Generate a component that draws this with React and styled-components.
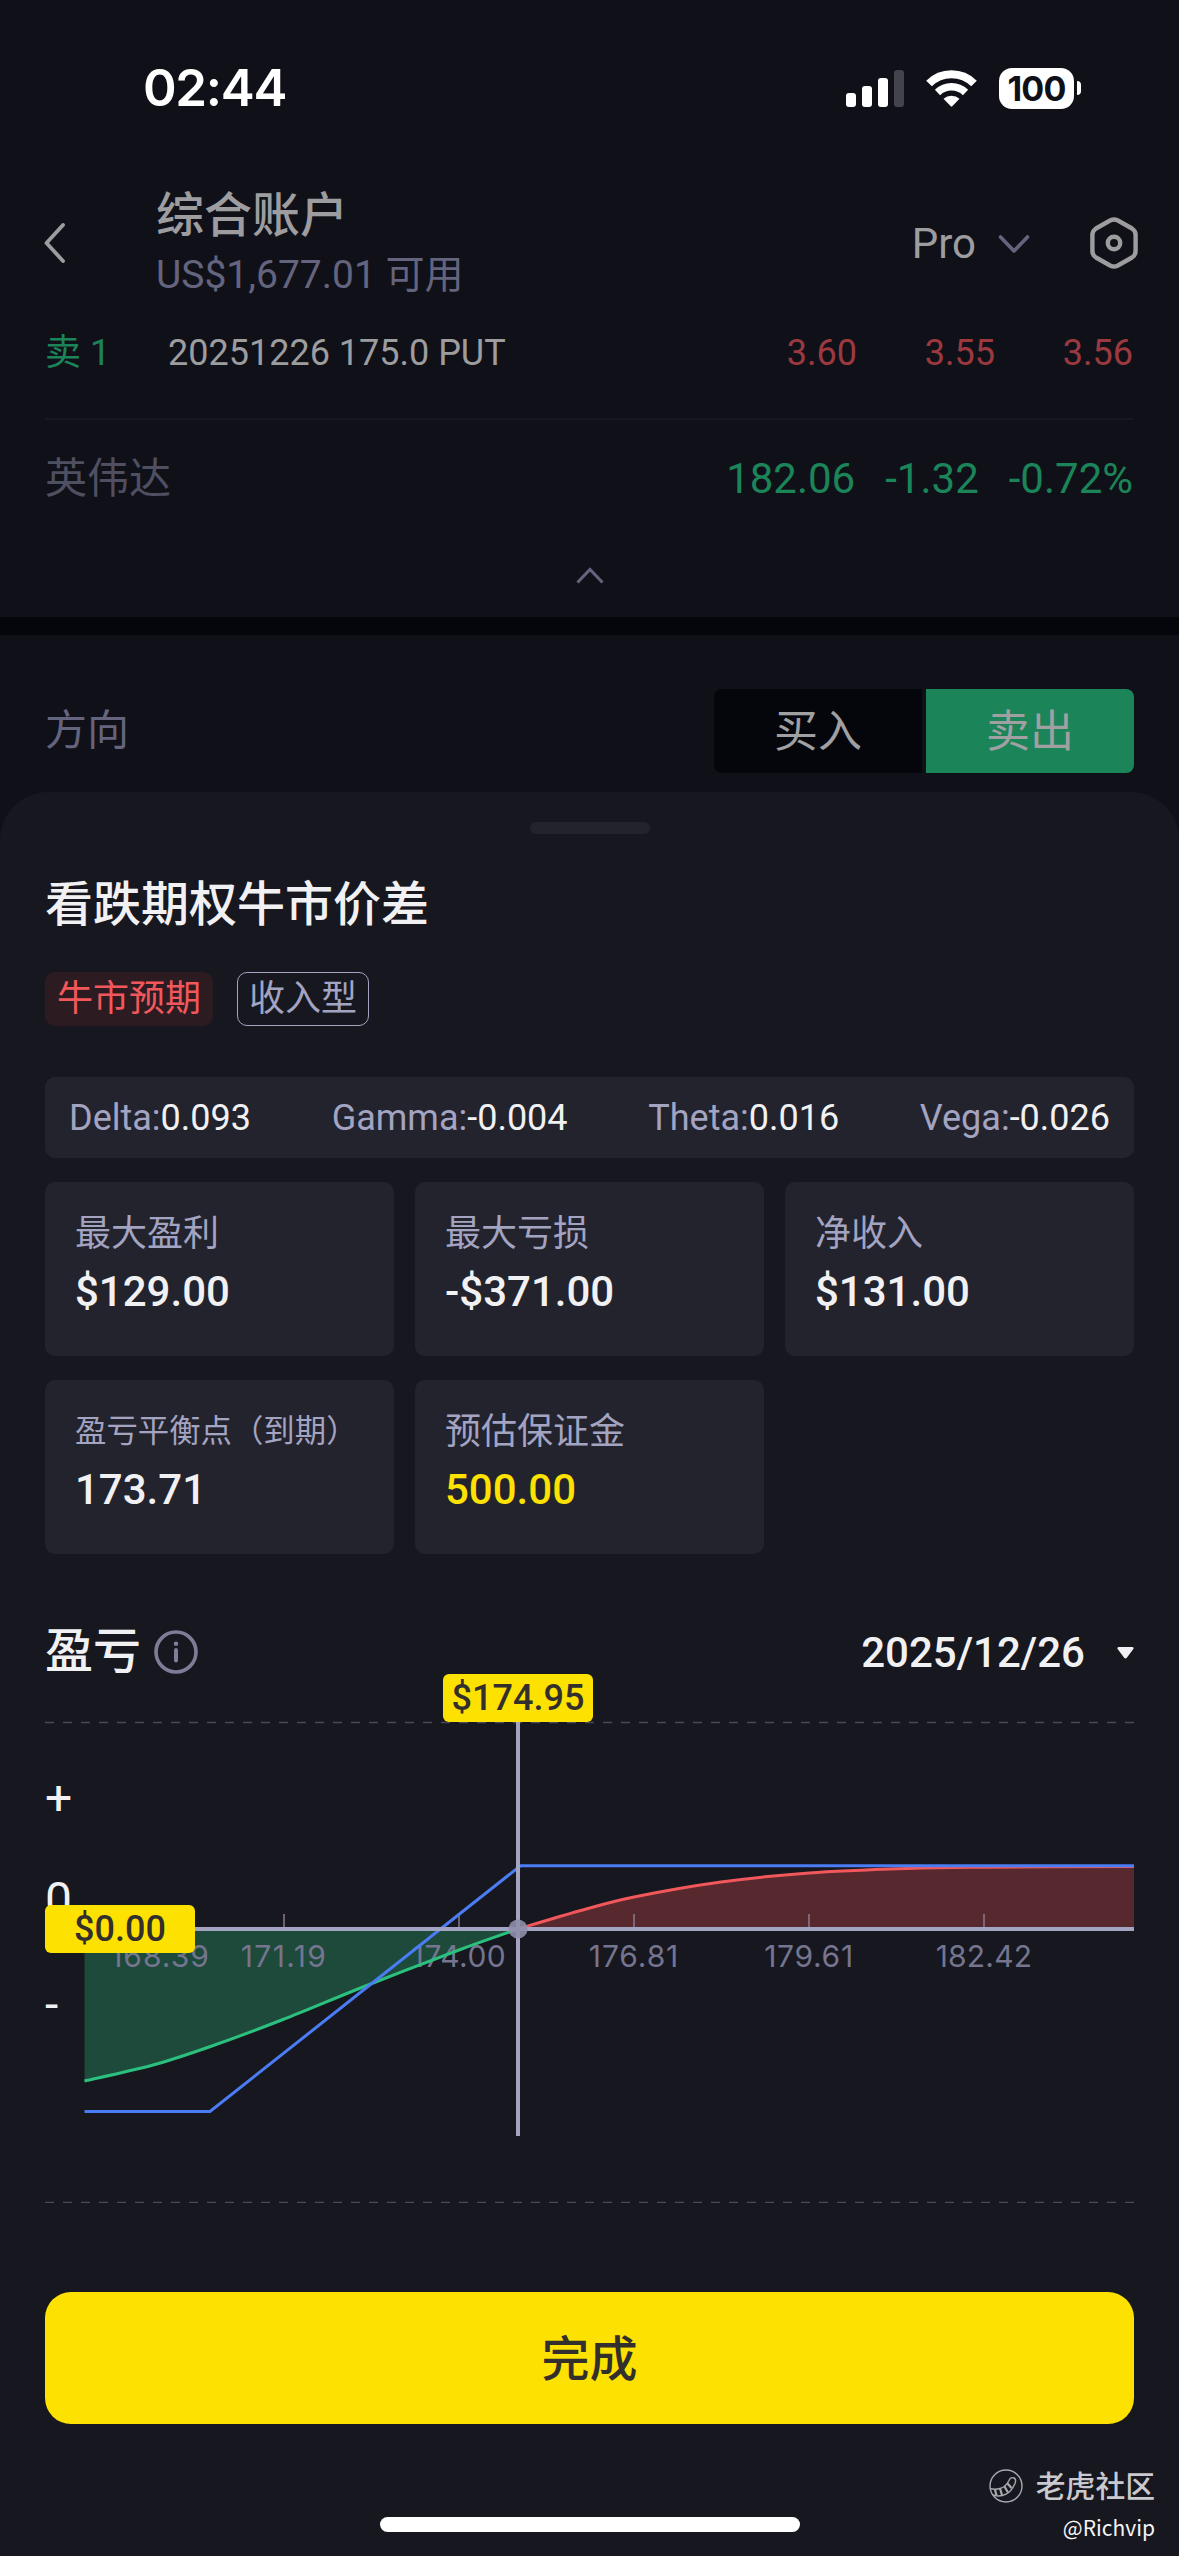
import { useState } from "react";
import styled, { createGlobalStyle } from "styled-components";

const GlobalStyle = createGlobalStyle`
  * {
    box-sizing: border-box;
  }
  body {
    margin: 0;
    background-color: #101118;
  }
`;

const Screen = styled.div`
  display: flex;
  flex-direction: column;
  width: 1179px;
  height: 2556px;
  overflow: hidden;
  background-color: #101118;
  color: #9d9da0;
  font-family: Roboto, "Noto Sans CJK SC", sans-serif;
  white-space: nowrap;
`;

const StatusBar = styled.div`
  display: flex;
  justify-content: space-between;
  align-items: center;
  height: 176px;
  padding: 0 98px 0 143px;
  color: #fff;
`;
const Clock = styled.div`
  font-family: Inter, sans-serif;
  font-size: 51px;
  font-weight: 600;
  line-height: 60px;
  letter-spacing: -1.3px;
`;
const StatusIcons = styled.div`
  display: flex;
  align-items: center;
`;
const SignalIcon = styled.svg`
  width: 58px;
  height: 37px;
  margin-right: 22px;
`;
const WifiIcon = styled.svg`
  width: 51px;
  height: 37px;
  margin-right: 22px;
`;
const Battery = styled.div`
  width: 75px;
  height: 41px;
  border-radius: 13px;
  background-color: #fff;
  color: #101118;
  font-family: Inter, sans-serif;
  font-size: 34px;
  font-weight: 700;
  line-height: 41px;
  letter-spacing: -0.8px;
  text-align: center;
`;
const BatteryTip = styled.div`
  width: 4px;
  height: 14px;
  margin-left: 3px;
  border-radius: 0 5px 5px 0;
  background-color: #fff;
`;

const Header = styled.div`
  display: flex;
  align-items: center;
  height: 134px;
  padding: 0 41px 0 44px;
`;
const BackIcon = styled.svg`
  width: 21px;
  height: 40px;
  margin-right: 91px;
`;
const Account = styled.div`
  flex: 1;
`;
const AccountName = styled.div`
  font-size: 48px;
  font-weight: 500;
  line-height: 64px;
`;
const AccountFunds = styled.div`
  color: #64647f;
  font-size: 39px;
  line-height: 54px;
`;
const Mode = styled.div`
  padding-top: 2px;
  font-size: 42px;
  line-height: 50px;
`;
const ModeChevron = styled.svg`
  width: 32px;
  height: 20px;
  margin: 2px 60px 0 22px;
`;
const SettingsIcon = styled.svg`
  width: 48px;
  height: 52px;
`;

const LegRow = styled.div`
  display: flex;
  align-items: center;
  height: 84px;
  margin: 0 46px 0 45px;
  font-size: 36px;
  line-height: 52px;
`;
const LegSide = styled.div`
  width: 123px;
  padding-top: 2px;
  color: #1c8459;
`;
const LegName = styled.div`
  flex: 1;
  padding-top: 2px;
`;
const LegPrice = styled.div`
  width: 138px;
  padding-top: 2px;
  color: #9c3940;
  text-align: right;
`;

const StockRow = styled.div`
  display: flex;
  align-items: center;
  height: 120px;
  margin: 24px 46px 0 45px;
  border-top: 2px solid #171820;
  color: #1c8459;
  font-size: 42px;
  line-height: 60px;
`;
const StockName = styled.div`
  flex: 1;
  color: #4f4f62;
`;
const StockValue = styled.div`
  margin-left: 30px;
`;
const CollapseRow = styled.div`
  display: flex;
  justify-content: center;
  height: 79px;
  padding-top: 29px;
`;
const CollapseIcon = styled.svg`
  width: 28px;
  height: 17px;
`;
const Band = styled.div`
  height: 18px;
  background-color: #05060c;
`;

const DirectionRow = styled.div`
  display: flex;
  justify-content: space-between;
  align-items: flex-start;
  height: 157px;
  padding: 54px 45px 0;
`;
const DirectionLabel = styled.div`
  color: #64647f;
  font-size: 42px;
  line-height: 84px;
`;
const Toggle = styled.div`
  display: flex;
  gap: 4px;
  border-radius: 8px;
  overflow: hidden;
`;
const ToggleOption = styled.button`
  width: 208px;
  height: 84px;
  padding: 2px 0 0;
  border: none;
  background-color: ${(props) => (props.$active ? "#1c8459" : "#05060c")};
  color: #a0a0a3;
  font: inherit;
  font-size: 44px;
  line-height: 82px;
`;

const Sheet = styled.div`
  display: flex;
  flex-direction: column;
  height: 1764px;
  padding: 30px 45px 0;
  border-radius: 48px 48px 0 0;
  background-color: #17171f;
  color: #f1f1f3;
`;
const Handle = styled.div`
  align-self: center;
  width: 120px;
  height: 12px;
  border-radius: 6px;
  background-color: #23232d;
`;
const SheetTitle = styled.div`
  margin-top: 36px;
  font-size: 48px;
  font-weight: 500;
  line-height: 70px;
`;
const Tags = styled.div`
  display: flex;
  gap: 24px;
  margin-top: 32px;
`;
const Tag = styled.div`
  height: 54px;
  padding: 0 12px;
  border-radius: 10px;
  background-color: #2c1c22;
  color: #f2585b;
  font-size: 36px;
  line-height: 55px;
`;
const OutlineTag = styled(Tag)`
  padding: 0 11px;
  border: 1px solid #a3a3c2;
  background-color: transparent;
  color: #a3a3c2;
  line-height: 53px;
`;
const Greeks = styled.div`
  display: flex;
  justify-content: space-between;
  align-items: center;
  height: 81px;
  margin-top: 51px;
  padding: 0 24px;
  border-radius: 10px;
  background-color: #23232d;
  font-size: 36px;
  line-height: 42px;
`;
const GreekName = styled.span`
  color: #a3a3c2;
`;
const Cards = styled.div`
  display: grid;
  grid-template-columns: repeat(3, 349px);
  gap: 24px 21px;
  margin-top: 24px;
`;
const Card = styled.div`
  height: 174px;
  padding: 26px 30px;
  border-radius: 10px;
  background-color: #23232d;
`;
const CardLabel = styled.div`
  color: #a3a3c2;
  font-size: ${(props) => (props.$small ? "31.4px" : "36px")};
  line-height: 52px;
`;
const CardValue = styled.div`
  margin-top: 3px;
  color: ${(props) => (props.$highlight ? "#fde100" : "#f1f1f3")};
  font-size: 42px;
  font-weight: 500;
  line-height: 58px;
`;

const ChartHeader = styled.div`
  display: flex;
  align-items: center;
  height: 70px;
  margin-top: 63px;
`;
const ChartTitle = styled.div`
  font-size: 48px;
  font-weight: 500;
  line-height: 66px;
`;
const InfoIcon = styled.svg`
  width: 44px;
  height: 44px;
  margin-left: 13px;
`;
const ExpiryDate = styled.div`
  margin-left: auto;
  font-size: 42px;
  font-weight: 500;
`;
const DateCaret = styled.svg`
  width: 17px;
  height: 12px;
  margin: 1px 0 0 32px;
`;

const Chart = styled.div`
  position: relative;
  height: 482px;
  margin-top: 34px;
`;
const Plot = styled.svg`
  display: block;
`;
const AxisLabel = styled.text`
  fill: #757590;
  font-family: Inter, sans-serif;
  font-size: 30px;
  letter-spacing: ${(props) => props.$spacing}px;
  text-anchor: middle;
`;
const SignLabel = styled.text`
  fill: #f1f1f3;
  font-family: Roboto, sans-serif;
  font-size: 48px;
`;
const Badge = styled.div`
  position: absolute;
  top: ${(props) => props.$top}px;
  left: ${(props) => props.$left}px;
  width: 150px;
  height: 48px;
  border-radius: 6px;
  background-color: #fde100;
  color: #332f2c;
  font-size: 36px;
  font-weight: 500;
  line-height: 48px;
  text-align: center;
`;

const DoneButton = styled.button`
  height: 132px;
  margin-top: 89px;
  padding: 0 0 6px;
  border: none;
  border-radius: 26px;
  background-color: #fde100;
  color: #332f2c;
  font: inherit;
  font-size: 48px;
  font-weight: 500;
`;
const Footer = styled.div`
  position: relative;
  display: flex;
  justify-content: center;
  padding-top: 93px;
`;
const HomeIndicator = styled.div`
  width: 420px;
  height: 15px;
  border-radius: 8px;
  background-color: #fff;
`;
const Watermark = styled.div`
  position: absolute;
  top: 40px;
  right: -21px;
  display: flex;
  flex-direction: column;
  align-items: flex-end;
  font-family: "Noto Sans CJK SC", sans-serif;
`;
const Community = styled.div`
  display: flex;
  align-items: center;
  gap: 13px;
  color: #c9c9cf;
  font-size: 29.8px;
  font-weight: 500;
  line-height: 40px;
`;
const CommunityLogo = styled.svg`
  width: 34px;
  height: 34px;
  margin-top: 4px;
`;
const UserName = styled.div`
  margin-top: 7px;
  color: #f4f4f6;
  font-size: 21px;
  line-height: 32px;
`;

const greeks = [
  ["Delta", "0.093"],
  ["Gamma", "-0.004"],
  ["Theta", "0.016"],
  ["Vega", "-0.026"],
];

const stats = [
  { label: "最大盈利", value: "$129.00" },
  { label: "最大亏损", value: "-$371.00" },
  { label: "净收入", value: "$131.00" },
  { label: "盈亏平衡点（到期）", value: "173.71", small: true },
  { label: "预估保证金", value: "500.00", highlight: true },
];

const ticks = [
  { x: 64, labelX: 115, label: "168.39", spacing: 1 },
  { x: 239, labelX: 239, label: "171.19", spacing: 1.4 },
  { x: 414, labelX: 414, label: "174.00", spacing: 0.5 },
  { x: 589, labelX: 589, label: "176.81", spacing: 0.9 },
  { x: 764, labelX: 764, label: "179.61", spacing: 0.7 },
  { x: 939, labelX: 939, label: "182.42", spacing: 0.2 },
];

const lossPoints = [
  [39.5, 360],
  [108, 344],
  [165.5, 325.5],
  [238, 298.5],
  [320.5, 265],
  [414, 229],
  [473, 208],
];
const profitPoints = [
  [473, 208],
  [534, 190],
  [589, 176],
  [676, 161],
  [764, 152],
  [863, 147.5],
  [937, 146.2],
  [1089, 145.4],
];

// Catmull-Rom spline through the points, as cubic beziers
const toCurve = (points) =>
  points.slice(1).reduce((path, point, i) => {
    const before = points[i - 1] || points[i];
    const from = points[i];
    const after = points[i + 2] || point;
    const c1 = [from[0] + (point[0] - before[0]) / 6, from[1] + (point[1] - before[1]) / 6];
    const c2 = [point[0] - (after[0] - from[0]) / 6, point[1] - (after[1] - from[1]) / 6];
    return `${path}C${c1} ${c2} ${point}`;
  }, `M${points[0]}`);

const lossCurve = toCurve(lossPoints);
const profitCurve = toCurve(profitPoints);

const PayoffChart = () => (
  <Chart>
    <Plot width="1089" height="482" viewBox="0 0 1089 482" fill="none">
      <path d="M0 1.5H1089M0 481.5H1089" stroke="#4a4a54" strokeWidth="1.5" strokeDasharray="9 9" />
      <SignLabel x="0" y="93">+</SignLabel>
      <SignLabel x="0" y="195">0</SignLabel>
      <SignLabel x="0" y="300">-</SignLabel>
      <path d={`${lossCurve}H39.5Z`} fill="#1d4a3a" />
      <path d={`${profitCurve}V208H473Z`} fill="#57282e" />
      {ticks.map((tick) => (
        <g key={tick.label}>
          <path d={`M${tick.x} 193V206`} stroke="#8a7a90" strokeWidth="1.5" />
          <AxisLabel x={tick.labelX} y="246" $spacing={tick.spacing}>
            {tick.label}
          </AxisLabel>
        </g>
      ))}
      <path d={lossCurve} stroke="#2bc07e" strokeWidth="3" />
      <path d={profitCurve} stroke="#f2585b" strokeWidth="3" />
      <path d="M39.5 390.5H165L475.5 144.7H1089" stroke="#4a7cf3" strokeWidth="3" />
      <path d="M39.5 208H1089" stroke="#a3a3c2" strokeWidth="4" />
      <path d="M473 1V415" stroke="#a3a3c2" strokeWidth="4" />
      <circle cx="473" cy="208" r="9.5" fill="#8f8fac" fillOpacity="0.9" />
    </Plot>
    <Badge $top={-47} $left={398}>$174.95</Badge>
    <Badge $top={184} $left={0}>$0.00</Badge>
  </Chart>
);

const App = () => {
  const [side, setSide] = useState("sell");

  return (
    <Screen>
      <GlobalStyle />
      <StatusBar>
        <Clock>02:44</Clock>
        <StatusIcons>
          <SignalIcon viewBox="0 0 58 37" fill="#fff">
            <rect x="0" y="23" width="10" height="14" rx="3" />
            <rect x="16" y="16" width="10" height="21" rx="3" />
            <rect x="32" y="8" width="10" height="29" rx="3" />
            <rect x="48" y="0" width="10" height="37" rx="3" fill="#43434c" />
          </SignalIcon>
          <WifiIcon viewBox="0 0 51 37" fill="none" stroke="#fff">
            <path d="M3 13.5A32 32 0 0 1 48 13.5" strokeWidth="8" />
            <path d="M11.5 22.5A20 20 0 0 1 39.5 22.5" strokeWidth="7.5" />
            <path d="M17.5 28.7A12 12 0 0 1 33.5 28.7L26.5 36Q25.5 37 24.5 36Z" fill="#fff" stroke="none" />
          </WifiIcon>
          <Battery>100</Battery>
          <BatteryTip />
        </StatusIcons>
      </StatusBar>

      <Header>
        <BackIcon viewBox="0 0 21 40" fill="none" stroke="#9d9da0" strokeWidth="3.8">
          <path d="M19 2L2.5 20L19 38" strokeLinecap="round" strokeLinejoin="round" />
        </BackIcon>
        <Account>
          <AccountName>综合账户</AccountName>
          <AccountFunds>US$1,677.01 可用</AccountFunds>
        </Account>
        <Mode>Pro</Mode>
        <ModeChevron viewBox="0 0 32 20" fill="none" stroke="#64647f" strokeWidth="3.6">
          <path d="M2.5 3L16 17L29.5 3" strokeLinecap="round" strokeLinejoin="round" />
        </ModeChevron>
        <SettingsIcon viewBox="0 0 48 52" fill="none" stroke="#9d9da0" strokeWidth="4.4">
          <path d="M20.5 3.3Q24 1.6 27.5 3.3L42 11.5Q45.6 13.8 45.6 18V34Q45.6 38.2 42 40.5L27.5 48.7Q24 50.4 20.5 48.7L6 40.5Q2.4 38.2 2.4 34V18Q2.4 13.8 6 11.5Z" />
          <circle cx="24" cy="26" r="6.2" />
        </SettingsIcon>
      </Header>

      <LegRow>
        <LegSide>卖 1</LegSide>
        <LegName>20251226 175.0 PUT</LegName>
        <LegPrice>3.60</LegPrice>
        <LegPrice>3.55</LegPrice>
        <LegPrice>3.56</LegPrice>
      </LegRow>
      <StockRow>
        <StockName>英伟达</StockName>
        <StockValue>182.06</StockValue>
        <StockValue>-1.32</StockValue>
        <StockValue>-0.72%</StockValue>
      </StockRow>
      <CollapseRow>
        <CollapseIcon viewBox="0 0 28 17" fill="none" stroke="#64647f" strokeWidth="3">
          <path d="M1.5 15.5L14 2.5L26.5 15.5" />
        </CollapseIcon>
      </CollapseRow>
      <Band />

      <DirectionRow>
        <DirectionLabel>方向</DirectionLabel>
        <Toggle>
          <ToggleOption $active={side === "buy"} onClick={() => setSide("buy")}>
            买入
          </ToggleOption>
          <ToggleOption $active={side === "sell"} onClick={() => setSide("sell")}>
            卖出
          </ToggleOption>
        </Toggle>
      </DirectionRow>

      <Sheet>
        <Handle />
        <SheetTitle>看跌期权牛市价差</SheetTitle>
        <Tags>
          <Tag>牛市预期</Tag>
          <OutlineTag>收入型</OutlineTag>
        </Tags>
        <Greeks>
          {greeks.map(([name, value]) => (
            <div key={name}>
              <GreekName>{name}:</GreekName>
              {value}
            </div>
          ))}
        </Greeks>
        <Cards>
          {stats.map((stat) => (
            <Card key={stat.label}>
              <CardLabel $small={stat.small}>{stat.label}</CardLabel>
              <CardValue $highlight={stat.highlight}>{stat.value}</CardValue>
            </Card>
          ))}
        </Cards>
        <ChartHeader>
          <ChartTitle>盈亏</ChartTitle>
          <InfoIcon viewBox="0 0 44 44" fill="none" stroke="#7d7d98">
            <circle cx="22" cy="22" r="20" strokeWidth="3.6" />
            <path d="M22 20V30.5" strokeWidth="4" strokeLinecap="round" />
            <circle cx="22" cy="13.8" r="2.3" fill="#7d7d98" stroke="none" />
          </InfoIcon>
          <ExpiryDate>2025/12/26</ExpiryDate>
          <DateCaret viewBox="0 0 17 12" fill="#f1f1f3">
            <path d="M1.5 0H15.5Q17.5 0.5 16 2.5L9.8 10.8Q8.5 12.2 7.2 10.8L1 2.5Q-0.5 0.5 1.5 0Z" />
          </DateCaret>
        </ChartHeader>
        <PayoffChart />
        <DoneButton>完成</DoneButton>
        <Footer>
          <HomeIndicator />
          <Watermark>
            <Community>
              <CommunityLogo viewBox="0 0 34 34" fill="none" stroke="#a9a9b1" strokeWidth="1.4">
                <circle cx="17" cy="17" r="16" />
                <path d="M1.5 19.8C5 20.5 8 20.5 11 19.5C15 18.5 18 15.5 20 11.5C21 9 23 8 25 9C27 10 26.8 12.5 26 14.5C24 19 21.5 23 17 25.2C13 27.2 8 27.5 4 26" />
                <path d="M6 20.5L7.5 26.5M11 19.5L13 26M15.5 17.5L19 23.5M18.5 14.5L22.5 19" strokeWidth="2.2" />
              </CommunityLogo>
              老虎社区
            </Community>
            <UserName>@Richvip</UserName>
          </Watermark>
        </Footer>
      </Sheet>
    </Screen>
  );
};

export default App;
